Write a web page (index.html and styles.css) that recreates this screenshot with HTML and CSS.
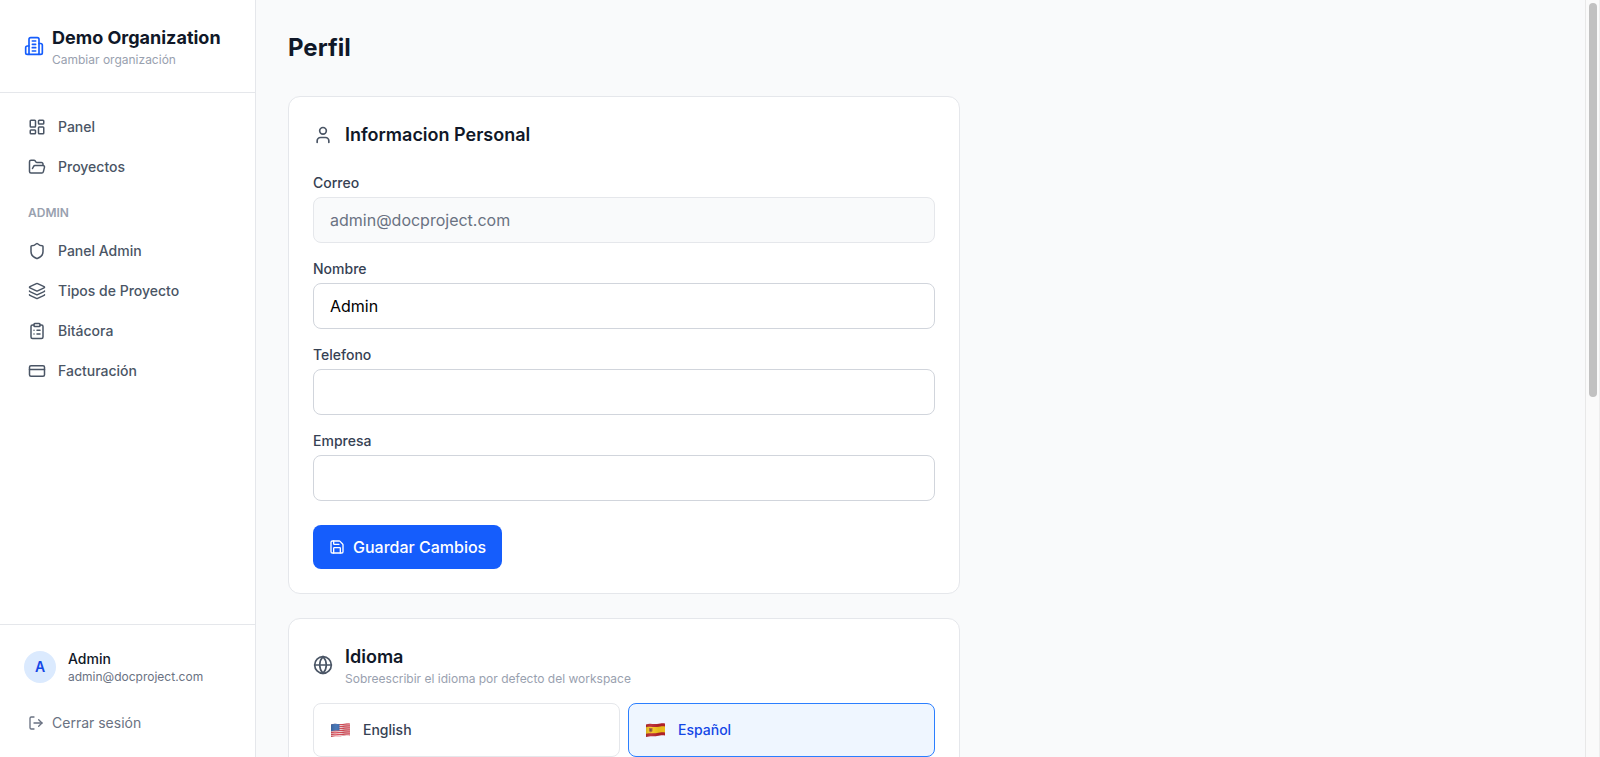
FILE: index.html
```html
<!DOCTYPE html>
<html lang="es">
<head>
  <meta charset="UTF-8">
  <meta name="viewport" content="width=device-width, initial-scale=1.0">
  <title>Perfil</title>
  <link rel="stylesheet" href="styles.css">
</head>
<body>
<div class="app">
  <aside class="sidebar">
    <a class="org" href="#">
      <svg class="icon icon-20" viewBox="0 0 24 24"><path d="M6 22V4a2 2 0 0 1 2-2h8a2 2 0 0 1 2 2v18Z"/><path d="M6 12H4a2 2 0 0 0-2 2v6a2 2 0 0 0 2 2h2"/><path d="M18 9h2a2 2 0 0 1 2 2v9a2 2 0 0 1-2 2h-2"/><path d="M10 6h4"/><path d="M10 10h4"/><path d="M10 14h4"/><path d="M10 18h4"/></svg>
      <span class="org-text">
        <span class="org-name">Demo Organization</span>
        <span class="org-switch">Cambiar organización</span>
      </span>
    </a>

    <nav class="nav">
      <a class="nav-link" href="#">
        <svg class="icon icon-18" viewBox="0 0 24 24"><rect width="7" height="9" x="3" y="3" rx="1"/><rect width="7" height="5" x="14" y="3" rx="1"/><rect width="7" height="9" x="14" y="12" rx="1"/><rect width="7" height="5" x="3" y="16" rx="1"/></svg>
        Panel
      </a>
      <a class="nav-link" href="#">
        <svg class="icon icon-18" viewBox="0 0 24 24"><path d="m6 14 1.5-2.9A2 2 0 0 1 9.24 10H20a2 2 0 0 1 1.94 2.5l-1.54 6a2 2 0 0 1-1.95 1.5H4a2 2 0 0 1-2-2V5a2 2 0 0 1 2-2h3.9a2 2 0 0 1 1.69.9l.81 1.2a2 2 0 0 0 1.67.9H18a2 2 0 0 1 2 2v2"/></svg>
        Proyectos
      </a>
      <div class="nav-heading">ADMIN</div>
      <a class="nav-link" href="#">
        <svg class="icon icon-18" viewBox="0 0 24 24"><path d="M20 13c0 5-3.5 7.5-7.66 8.95a1 1 0 0 1-.67-.01C7.5 20.5 4 18 4 13V6a1 1 0 0 1 1-1c2 0 4.5-1.2 6.24-2.72a1.17 1.17 0 0 1 1.52 0C14.51 3.81 17 5 19 5a1 1 0 0 1 1 1z"/></svg>
        Panel Admin
      </a>
      <a class="nav-link" href="#">
        <svg class="icon icon-18" viewBox="0 0 24 24"><path d="M12.83 2.18a2 2 0 0 0-1.66 0L2.6 6.08a1 1 0 0 0 0 1.83l8.58 3.91a2 2 0 0 0 1.66 0l8.58-3.9a1 1 0 0 0 0-1.83z"/><path d="M2 12a1 1 0 0 0 .58.91l8.6 3.91a2 2 0 0 0 1.65 0l8.58-3.9A1 1 0 0 0 22 12"/><path d="M2 17a1 1 0 0 0 .58.91l8.6 3.91a2 2 0 0 0 1.65 0l8.58-3.9A1 1 0 0 0 22 17"/></svg>
        Tipos de Proyecto
      </a>
      <a class="nav-link" href="#">
        <svg class="icon icon-18" viewBox="0 0 24 24"><rect width="8" height="4" x="8" y="2" rx="1"/><path d="M16 4h2a2 2 0 0 1 2 2v14a2 2 0 0 1-2 2H6a2 2 0 0 1-2-2V6a2 2 0 0 1 2-2h2"/><path d="M12 11h4"/><path d="M12 16h4"/><path d="M8 11h.01"/><path d="M8 16h.01"/></svg>
        Bitácora
      </a>
      <a class="nav-link" href="#">
        <svg class="icon icon-18" viewBox="0 0 24 24"><rect width="20" height="14" x="2" y="5" rx="2"/><path d="M2 10h20"/></svg>
        Facturación
      </a>
    </nav>

    <div class="account">
      <a class="user" href="#">
        <span class="avatar">A</span>
        <span class="user-text">
          <span class="user-name">Admin</span>
          <span class="user-email">admin@docproject.com</span>
        </span>
      </a>
      <button class="logout" type="button">
        <svg class="icon icon-16" viewBox="0 0 24 24"><path d="m16 17 5-5-5-5"/><path d="M21 12H9"/><path d="M9 21H5a2 2 0 0 1-2-2V5a2 2 0 0 1 2-2h4"/></svg>
        Cerrar sesión
      </button>
    </div>
  </aside>

  <main class="main">
    <h1 class="page-title">Perfil</h1>

    <div class="cards">
      <section class="card">
        <div class="card-header">
          <svg class="icon icon-20" viewBox="0 0 24 24"><path d="M19 21v-2a4 4 0 0 0-4-4H9a4 4 0 0 0-4 4v2"/><circle cx="12" cy="7" r="4"/></svg>
          <h2 class="card-title">Informacion Personal</h2>
        </div>
        <form class="form">
          <div class="field">
            <label for="email">Correo</label>
            <input class="input" type="email" id="email" value="admin@docproject.com" disabled>
          </div>
          <div class="field">
            <label for="name">Nombre</label>
            <input class="input" type="text" id="name" value="Admin">
          </div>
          <div class="field">
            <label for="phone">Telefono</label>
            <input class="input" type="tel" id="phone">
          </div>
          <div class="field">
            <label for="company">Empresa</label>
            <input class="input" type="text" id="company">
          </div>
          <button class="save" type="submit">
            <svg class="icon icon-16" viewBox="0 0 24 24"><path d="M15.2 3a2 2 0 0 1 1.4.6l3.8 3.8a2 2 0 0 1 .6 1.4V19a2 2 0 0 1-2 2H5a2 2 0 0 1-2-2V5a2 2 0 0 1 2-2z"/><path d="M17 21v-7a1 1 0 0 0-1-1H8a1 1 0 0 0-1 1v7"/><path d="M7 3v4a1 1 0 0 0 1 1h7"/></svg>
            Guardar Cambios
          </button>
        </form>
      </section>

      <section class="card">
        <div class="card-header card-header-tight">
          <svg class="icon icon-20" viewBox="0 0 24 24"><circle cx="12" cy="12" r="10"/><path d="M12 2a14.5 14.5 0 0 0 0 20 14.5 14.5 0 0 0 0-20"/><path d="M2 12h20"/></svg>
          <div>
            <h2 class="card-title">Idioma</h2>
            <p class="card-note">Sobreescribir el idioma por defecto del workspace</p>
          </div>
        </div>
        <div class="languages">
          <button class="language" type="button" aria-pressed="false">
            <svg class="flag" viewBox="0 0 21 28">
              <defs>
                <clipPath id="wave"><path d="M1 8.500C5 7 8 8.500 12 8S17 7 20 7.500V19.500C17 19 15 19.500 12 20S5 19.500 1 21Z"/></clipPath>
                <linearGradient id="shade">
                  <stop offset="0" stop-color="#000" stop-opacity=".18"/>
                  <stop offset=".3" stop-color="#fff" stop-opacity=".08"/>
                  <stop offset=".65" stop-color="#000" stop-opacity=".08"/>
                  <stop offset="1" stop-color="#000" stop-opacity=".04"/>
                </linearGradient>
              </defs>
              <g clip-path="url(#wave)">
                <path fill="#f3d3d6" d="M0 6h21v16H0z"/>
                <path fill="none" stroke="#dc4a57" stroke-width="1.100" d="M0 9C5 7 8 9 12 8.500S17 7.500 21 8M0 11C5 9 8 11 12 10.500S17 9.500 21 10M0 13C5 11 8 13 12 12.500S17 11.500 21 12M0 15C5 13 8 15 12 14.500S17 13.500 21 14M0 17C5 15 8 17 12 16.500S17 15.500 21 16M0 19C5 17 8 19 12 18.500S17 17.500 21 18M0 21C5 19 8 21 12 20.500S17 19.500 21 20"/>
                <path fill="#3b6cb0" d="M0 6h9.500v8.500C7 14.500 4 14.500 0 15.500Z"/>
                <path fill="url(#shade)" d="M0 6h21v16H0z"/>
              </g>
            </svg>
            English
          </button>
          <button class="language active" type="button" aria-pressed="true">
            <svg class="flag" viewBox="0 0 21 28">
              <g clip-path="url(#wave)">
                <path fill="#b9232b" d="M0 6h21v16H0z"/>
                <path fill="#f7c81c" d="M0 11.500C5 10 8 11.500 12 11S17 10 21 10.500V16.500C17 16 15 16.500 12 17S5 16.500 0 18Z"/>
                <path fill="#b0602f" d="M4 12h3.500v3.200L5.800 16.500 4 15.200z"/>
                <path fill="#6d4a2c" d="M5 13h1.500v2H5z"/>
                <path fill="url(#shade)" d="M0 6h21v16H0z"/>
              </g>
            </svg>
            Español
          </button>
        </div>
      </section>
    </div>
  </main>

  <div class="scrollbar" aria-hidden="true">
    <div class="scrollbar-thumb"></div>
  </div>
</div>
</body>
</html>
```

FILE: styles.css
```css
* {
  box-sizing: border-box;
}

body {
  margin: 0;
  font-family: Inter, sans-serif;
  font-size: 16px;
  line-height: 24px;
  color: #101828;
  background-color: #f9fafb;
}

h1, h2, p {
  margin: 0;
}

a {
  color: inherit;
  text-decoration: none;
}

button, input {
  font: inherit;
}

button {
  cursor: pointer;
}

.app {
  display: flex;
  height: 100vh;
}

.icon {
  flex-shrink: 0;
  fill: none;
  stroke: currentColor;
  stroke-width: 2;
  stroke-linecap: round;
  stroke-linejoin: round;
}

.icon-16 {
  width: 16px;
  height: 16px;
}

.icon-18 {
  width: 18px;
  height: 18px;
}

.icon-20 {
  width: 20px;
  height: 20px;
}

/* Sidebar */
.sidebar {
  display: flex;
  flex-direction: column;
  flex-shrink: 0;
  width: 256px;
  background-color: #fff;
  border-right: 1px solid #e5e7eb;
}

.org {
  display: flex;
  align-items: center;
  gap: 8px;
  padding: 24px;
  border-bottom: 1px solid #e5e7eb;
}

.org .icon {
  color: #155dfc;
}

.org-text, .user-text {
  display: flex;
  flex-direction: column;
}

.org-name {
  font-size: 18px;
  font-weight: 700;
  line-height: 28px;
}

.org-switch {
  font-size: 12px;
  line-height: 16px;
  color: #99a1af;
}

.nav {
  display: flex;
  flex: 1;
  flex-direction: column;
  gap: 4px;
  padding: 16px;
}

.nav-link {
  display: flex;
  align-items: center;
  gap: 12px;
  padding: 8px 12px;
  border-radius: 8px;
  font-size: 14px;
  font-weight: 500;
  line-height: 20px;
  color: #4a5565;
}

.nav-link:hover {
  background-color: #f9fafb;
}

.nav-heading {
  padding: 16px 12px 8px;
  font-size: 12px;
  font-weight: 600;
  line-height: 16px;
  color: #99a1af;
}

.account {
  padding: 16px;
  border-top: 1px solid #e5e7eb;
}

.user {
  display: flex;
  align-items: center;
  gap: 12px;
  margin-bottom: 12px;
  padding: 8px;
}

.avatar {
  display: flex;
  align-items: center;
  justify-content: center;
  width: 32px;
  height: 32px;
  border-radius: 50%;
  background-color: #dbeafe;
  font-size: 14px;
  font-weight: 600;
  color: #1447e6;
}

.user-name {
  font-size: 14px;
  font-weight: 500;
  line-height: 20px;
}

.user-email {
  font-size: 12px;
  line-height: 16px;
  color: #6a7282;
}

.logout {
  display: flex;
  align-items: center;
  gap: 8px;
  width: 100%;
  padding: 8px 12px;
  border: none;
  background: none;
  font-size: 14px;
  line-height: 20px;
  color: #6a7282;
}

/* Main */
.main {
  flex: 1;
  padding: 32px;
  overflow-y: auto;
  scrollbar-width: none;
}

.scrollbar {
  flex-shrink: 0;
  width: 15px;
  padding: 3px 2px 3px 3px;
  border-left: 1px solid #e8e8e8;
  border-right: 1px solid #ededed;
  background-color: #fafafa;
}

.scrollbar-thumb {
  height: 52.5%;
  border-radius: 4px;
  background-color: #c1c1c1;
}

.page-title {
  margin-bottom: 32px;
  font-size: 24px;
  font-weight: 700;
  line-height: 32px;
}

.cards {
  display: flex;
  flex-direction: column;
  gap: 24px;
  max-width: 672px;
}

.card {
  padding: 24px;
  border: 1px solid #e5e7eb;
  border-radius: 12px;
  background-color: #fff;
}

.card-header {
  display: flex;
  align-items: center;
  gap: 12px;
  margin-bottom: 24px;
}

.card-header-tight {
  margin-bottom: 16px;
}

.card-header .icon {
  color: #4a5565;
}

.card-title {
  font-size: 18px;
  font-weight: 600;
  line-height: 28px;
}

.card-note {
  font-size: 12px;
  line-height: 16px;
  color: #99a1af;
}

.form {
  display: flex;
  flex-direction: column;
  gap: 16px;
}

.field {
  display: flex;
  flex-direction: column;
  gap: 4px;
}

.field label {
  font-size: 14px;
  font-weight: 500;
  line-height: 20px;
  color: #364153;
}

.input {
  width: 100%;
  height: 46px;
  padding: 10px 16px;
  border: 1px solid #d1d5dc;
  border-radius: 8px;
  background-color: #fff;
  color: #000;
}

.input:disabled {
  border-color: #e5e7eb;
  background-color: #f9fafb;
  color: #6a7282;
}

.save {
  display: flex;
  align-items: center;
  align-self: flex-start;
  gap: 8px;
  margin-top: 8px;
  padding: 10px 16px;
  border: none;
  border-radius: 8px;
  background-color: #155dfc;
  font-weight: 500;
  color: #fff;
}

.save:hover {
  background-color: #1447e6;
}

.languages {
  display: grid;
  grid-template-columns: 1fr 1fr;
  gap: 8px;
}

.language {
  display: flex;
  align-items: center;
  gap: 12px;
  padding: 12px 16px;
  border: 1px solid #e5e7eb;
  border-radius: 8px;
  background-color: #fff;
  font-size: 14px;
  font-weight: 500;
  line-height: 20px;
  color: #364153;
}

.language.active {
  border-color: #2b7fff;
  background-color: #eff6ff;
  color: #1447e6;
}

.flag {
  width: 21px;
  height: 28px;
}
```
